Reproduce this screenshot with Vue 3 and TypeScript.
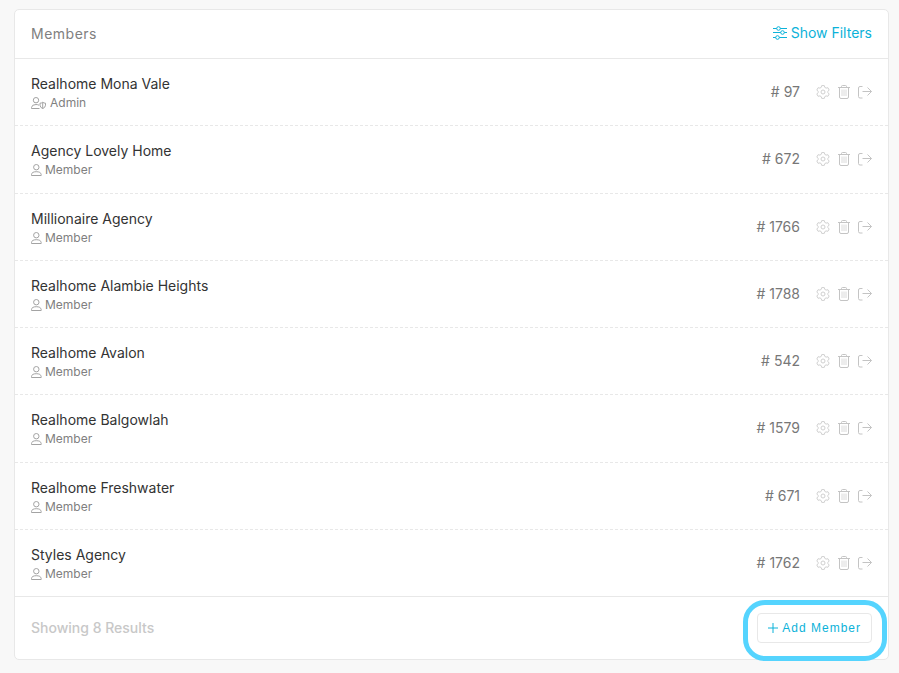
<script setup lang="ts">
interface Member {
  id: number
  name: string
  role: 'Admin' | 'Member'
}

const members: Member[] = [
  { id: 97, name: 'Realhome Mona Vale', role: 'Admin' },
  { id: 672, name: 'Agency Lovely Home', role: 'Member' },
  { id: 1766, name: 'Millionaire Agency', role: 'Member' },
  { id: 1788, name: 'Realhome Alambie Heights', role: 'Member' },
  { id: 542, name: 'Realhome Avalon', role: 'Member' },
  { id: 1579, name: 'Realhome Balgowlah', role: 'Member' },
  { id: 671, name: 'Realhome Freshwater', role: 'Member' },
  { id: 1762, name: 'Styles Agency', role: 'Member' },
]
</script>

<template>
  <main class="page">
    <section class="card">
      <header class="card-header">
        <h2 class="title">Members</h2>
        <button type="button" class="filters">
          <svg class="icon" viewBox="0 0 14 14" aria-hidden="true">
            <path d="M0 2.500H3.700M7.300 2.500H14M0 6.500H7.700M11.300 6.500H14M0 11.500H2.700M6.300 11.500H14" />
            <circle cx="5.500" cy="2.500" r="1.800" />
            <circle cx="9.500" cy="6.500" r="1.800" />
            <circle cx="4.500" cy="11.500" r="1.800" />
          </svg>
          Show Filters
        </button>
      </header>

      <ul class="list">
        <li v-for="member in members" :key="member.id" class="row">
          <div class="info">
            <span class="name">{{ member.name }}</span>
            <span class="role">
              <svg v-if="member.role === 'Admin'" class="role-icon wide" viewBox="0 0 16 12" aria-hidden="true">
                <circle cx="5" cy="3.200" r="2.700" />
                <path d="M8.500 11.500H.5V10.500Q.8 7.500 5 7.500Q6.800 7.500 8 8.200" />
                <path d="M11.700 5.300Q13 6.200 14.500 6.200V8.200Q14.300 10.600 11.700 11.600Q9.200 10.600 9 8.200V6.200Q10.500 6.200 11.700 5.300ZM11.700 5.300V11.600" />
              </svg>
              <svg v-else class="role-icon" viewBox="0 0 11 12" aria-hidden="true">
                <circle cx="5.300" cy="3.200" r="2.700" />
                <path d="M.5 11.500V10.500Q.8 7.700 5.300 7.700Q9.800 7.700 10.200 10.500V11.500Z" />
              </svg>
              {{ member.role }}
            </span>
          </div>
          <span class="number"># {{ member.id }}</span>
          <div class="actions">
            <button type="button" class="action" :aria-label="`Settings for ${member.name}`">
              <svg class="icon" viewBox="0 0 14 14" aria-hidden="true">
                <path d="M5.700 .6H8.300L8.800 2.400L10.100 3.100L11.900 2.700L13.200 5L11.900 6.300V7.700L13.200 9L11.900 11.300L10.100 10.900L8.800 11.600L8.300 13.400H5.700L5.200 11.600L3.900 10.900L2.100 11.300L.8 9L2.100 7.700V6.300L.8 5L2.100 2.700L3.900 3.100L5.200 2.400Z" />
                <circle cx="7" cy="7" r="2" />
              </svg>
            </button>
            <button type="button" class="action" :aria-label="`Delete ${member.name}`">
              <svg class="icon" viewBox="0 0 14 14" aria-hidden="true">
                <path class="strong" d="M1 2.500H13M4.500 2.500V1.500Q4.500 .5 5.500 .5H8.500Q9.500 .5 9.500 1.500V2.500M2.500 2.500V12Q2.500 13.500 4 13.500H10Q11.500 13.500 11.500 12V2.500" />
                <path class="slats" d="M5 4.500V11M7 4.500V11M9 4.500V11" />
              </svg>
            </button>
            <button type="button" class="action" :aria-label="`Remove ${member.name}`">
              <svg class="icon strong" viewBox="0 0 14 14" aria-hidden="true">
                <path d="M4.500 1.500H2Q.5 1.500 .5 3V11.500Q.5 13 2 13H4.500M4.500 6.500H13.500M9.500 2.500L13.500 6.500L9.500 10.500" />
              </svg>
            </button>
          </div>
        </li>
      </ul>

      <footer class="card-footer">
        <span class="count">Showing {{ members.length }} Results</span>
        <div class="add-wrap">
          <button type="button" class="add">
            <svg class="plus" viewBox="0 0 10 10" aria-hidden="true">
              <path d="M5 0V10M0 5H10" />
            </svg>
            Add Member
          </button>
          <span class="highlight" aria-hidden="true"></span>
        </div>
      </footer>
    </section>
  </main>
</template>

<style>
body {
  background: #f8f8f8;
}
</style>

<style scoped>
.page {
  padding: 9px 10px 13px 14px;
  font-family: Inter, "Liberation Sans", sans-serif;
  font-size: 14px;
  line-height: 20px;
  color: #333;
}

.card {
  background: #fff;
  border: 1px solid #e8e8e8;
  border-radius: 5px;
}

.card-header,
.card-footer {
  display: flex;
  align-items: center;
  justify-content: space-between;
  padding: 0 16px;
}

.card-header {
  height: 48px;
  border-bottom: 1px solid #e8e8e8;
}

.title {
  margin: 0;
  font-size: 14px;
  font-weight: 400;
  letter-spacing: 0.5px;
  color: #808080;
}

button {
  margin: 0;
  padding: 0;
  border: 0;
  background: none;
  font: inherit;
  cursor: pointer;
}

svg {
  display: block;
  flex: none;
  fill: none;
  stroke: currentColor;
}

.icon {
  width: 14px;
  height: 14px;
}

.filters {
  display: flex;
  align-items: center;
  gap: 4px;
  padding-bottom: 2px;
  color: #0bb2d9;
}

.list {
  display: grid;
  grid-auto-rows: 1fr;
  height: 538px;
  margin: 0;
  padding: 0;
  list-style: none;
}

.row {
  display: flex;
  align-items: center;
  padding: 0 16px;
  border-bottom: 1px dashed #e8e8e8;
}

.row:last-child {
  border-bottom-style: solid;
}

.info {
  display: flex;
  flex: 1;
  flex-direction: column;
  padding-top: 2px;
}

.name {
  line-height: 20px;
}

.role {
  display: flex;
  align-items: center;
  gap: 3px;
  font-size: 12px;
  line-height: 18px;
  color: #808080;
}

.role-icon {
  width: 11px;
  height: 12px;
  stroke: #a3a3a3;
}

.role-icon.wide {
  width: 16px;
}

.number {
  color: #777;
}

.actions {
  display: flex;
  gap: 7px;
  margin-left: 16px;
}

.action {
  color: #d0d0d0;
}

.strong {
  color: #c4c4c4;
}

.slats {
  stroke-width: 0.8;
}

.card-footer {
  height: 62px;
}

.count {
  font-weight: 500;
  color: #c8c8c8;
}

.add-wrap {
  position: relative;
}

.add {
  display: flex;
  align-items: center;
  gap: 4px;
  height: 30px;
  padding: 0 10px;
  border: 1px solid #e8e8e8;
  border-radius: 4px;
  font-family: "Liberation Sans", Arial, sans-serif;
  font-size: 12px;
  letter-spacing: 1px;
  color: #0bb2d9;
}

.plus {
  width: 10px;
  height: 10px;
}

.highlight {
  position: absolute;
  inset: -13px -15px -18px -14px;
  border: 5px solid #55d4fe;
  border-radius: 22px;
  pointer-events: none;
}
</style>
